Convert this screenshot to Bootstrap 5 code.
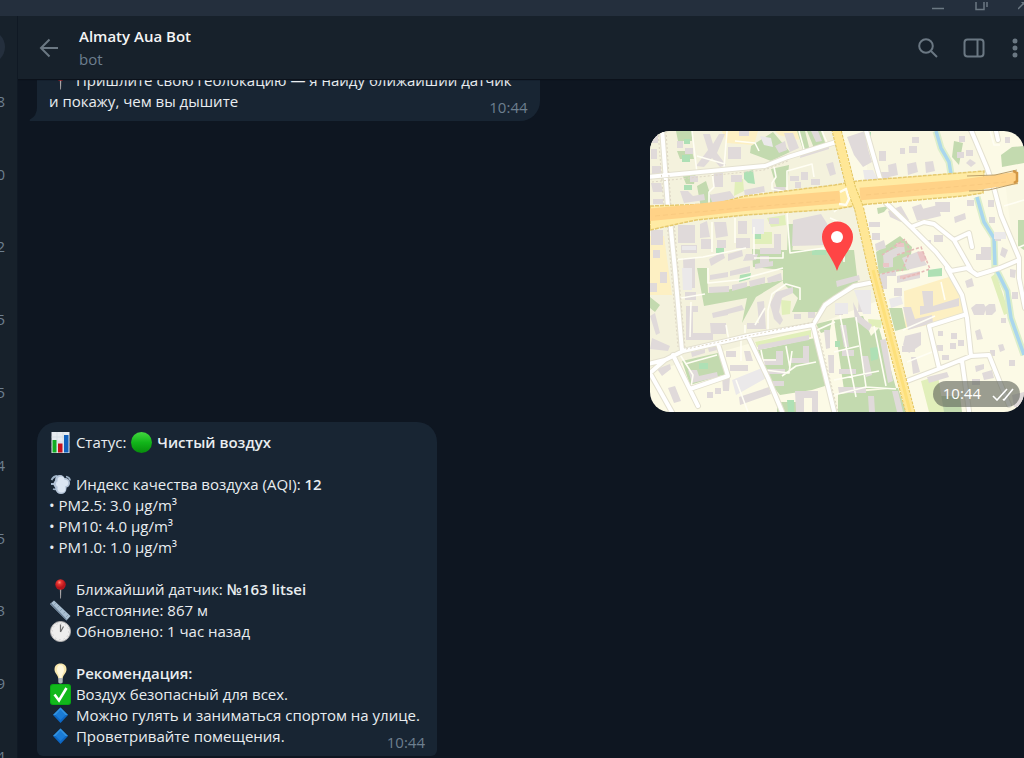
<!DOCTYPE html>
<html lang="ru">
<head>
<meta charset="utf-8">
<meta name="viewport" content="width=device-width, initial-scale=1">
<title>Almaty Aua Bot</title>
<link href="https://cdn.jsdelivr.net/npm/bootstrap@5.3.0/dist/css/bootstrap.min.css" rel="stylesheet">
<style>
body{font-family:"Open Sans","Noto Sans",sans-serif;font-size:15px;line-height:21px;background:#0e1621;color:#e9edf0}
button.ico{background:none;border:0;padding:0;color:#6b7883;display:block;flex:none}
.ico svg{display:block;fill:none;stroke:currentColor;stroke-width:2}
.titlebar{height:16px;background:#242f3d;flex:none}
.titlebar .ico svg{stroke-width:1.5}
.winbtns{gap:30px;margin-right:-7px}
.side{width:18px;background:#17212b;color:#6d7f8f;border-right:1px solid #101924;flex:none}
.me{height:49px;flex:none}
.me i{width:34px;height:34px;border-radius:50%;background:#242f3d;margin:14px 12px 0 0;flex:none}
.chats{margin-bottom:-35px}
.chats a{color:#6d7f8f;text-decoration:none;padding-right:12px;flex:1 1 0}
.chats span{flex:none}
.top{height:63px;background:#17212b;padding-left:21px;padding-right:4px;flex:none;box-shadow:0 1px 1px #0b111a;z-index:1}
.top h1{font-size:15px;line-height:21px;font-weight:600;margin:0 0 2px;color:#f5f5f5}
.who{margin-left:20px}
.sub,.time{color:#6d7f8f}
.tools{gap:25px}
.feed{padding:0 0 2px 19px;gap:10px}
.msg{background:#182533;border-radius:20px 20px 6px 6px;padding:10px 17px 9px 12px;flex:none}
.msg p{margin:0}
.msg b{font-weight:600}
.msg.first{border-radius:6px 20px 20px 0;padding-right:28px}
.time{right:12px;bottom:3px}
.tail{left:-8px;bottom:0}
.em{width:21px;height:21px;margin:-2px 1px;vertical-align:-3px}
.mapmsg{width:374px;border-radius:20px;overflow:hidden;flex:none}
.stamp{right:4px;bottom:5px;background:rgba(95,100,90,.62);color:#fff;border-radius:13px;padding:2px 6px 3px 10px;gap:11px}
</style>
</head>
<body>
<div class="vh-100 d-flex flex-column overflow-hidden">
  <div class="titlebar d-flex justify-content-end overflow-hidden">
    <div class="winbtns d-flex">
      <button class="ico" aria-label="Свернуть"><svg width="13" height="12"><path d="M0 6.500h12"/></svg></button>
      <button class="ico" aria-label="Развернуть"><svg width="13" height="12"><path d="M1-1h8v8.500H1zM12-1v6"/></svg></button>
      <button class="ico" aria-label="Закрыть"><svg width="13" height="12"><path d="M0-4l11 11M0 7L11-4"/></svg></button>
    </div>
  </div>
  <div class="d-flex flex-grow-1 overflow-hidden">
    <aside class="side d-flex flex-column overflow-hidden">
      <div class="me d-flex justify-content-end"><i></i></div>
      <nav class="chats d-flex flex-column flex-grow-1">
        <a href="#" class="d-flex justify-content-end align-items-center"><span>8</span></a>
        <a href="#" class="d-flex justify-content-end align-items-center"><span>0</span></a>
        <a href="#" class="d-flex justify-content-end align-items-center"><span>2</span></a>
        <a href="#" class="d-flex justify-content-end align-items-center"><span>5</span></a>
        <a href="#" class="d-flex justify-content-end align-items-center"><span>5</span></a>
        <a href="#" class="d-flex justify-content-end align-items-center"><span>4</span></a>
        <a href="#" class="d-flex justify-content-end align-items-center"><span>5</span></a>
        <a href="#" class="d-flex justify-content-end align-items-center"><span>3</span></a>
        <a href="#" class="d-flex justify-content-end align-items-center"><span>9</span></a>
        <a href="#" class="d-flex justify-content-end align-items-center"><span>4</span></a>
      </nav>
    </aside>
    <main class="d-flex flex-column flex-grow-1 overflow-hidden">
      <header class="top d-flex align-items-center">
        <button class="ico" aria-label="Назад"><svg width="20" height="20"><path d="M19 10H2M10.500 1.500L2 10l8.500 8.500"/></svg></button>
        <div class="who flex-grow-1">
          <h1>Almaty Aua Bot</h1>
          <div class="sub">bot</div>
        </div>
        <div class="tools d-flex align-items-center">
          <button class="ico" aria-label="Поиск"><svg width="20" height="20"><circle cx="8" cy="8" r="6.800"/><path d="M13 13l6 6"/></svg></button>
          <button class="ico" aria-label="Панель"><svg width="22" height="20"><rect x="1.500" y="1.500" width="19" height="17" rx="3"/><path d="M14.500 2v16"/></svg></button>
          <button class="ico" aria-label="Меню"><svg width="10" height="20"><g fill="currentColor" stroke="none"><circle cx="5" cy="3" r="2.500"/><circle cx="5" cy="10" r="2.500"/><circle cx="5" cy="17" r="2.500"/></g></svg></button>
        </div>
      </header>
      <section class="feed d-flex flex-column justify-content-end flex-grow-1 overflow-hidden">
        <div class="msg first position-relative align-self-start">
          <svg class="tail position-absolute" width="9" height="18"><path d="M8 0H9V18H1Q0 17 1 16.500Q8 13 8 4z" fill="#182533"/></svg>
          <p><svg class="em" viewBox="0 0 21 21"><use href="#pin"/></svg> Пришлите свою геолокацию — я найду ближайший датчик<br>и покажу, чем вы дышите</p>
          <span class="time position-absolute">10:44</span>
        </div>
        <div class="mapmsg position-relative align-self-end">
          <svg class="d-block w-100" viewBox="650 131 374 281" role="img" aria-label="Карта">
            <rect x="650" y="131" width="374" height="281" fill="#fcfae6"/>
            <path d="M650 131H838L862 230L880 300L815 325L650 372z" fill="#f4f2dd"/>
            <path d="M865 131H971L988 172L868 184zM1005 180h19v60h-12z" fill="#f9f7e2"/>
            <g fill="#fdf0c3">
              <path d="M722 131h36l-4 14-27-2zM775 131h24v9l-20-5zM650 236h14l8 59h-22z"/>
              <path d="M904 291l48-15 15 30-7 12-55 12z"/>
            </g>
            <!-- parks -->
            <g fill="#c3daaf">
              <path d="M783 250H854L858 284L836 295L820 312H792L798 298L783 283z"/>
              <path d="M697 268h10l1 25 76-13-28 17-14 26 5-25-43 8z"/>
              <path d="M751 146l22-14 17 20-19 9-21-8zM676 131h16v10h-14zM677 151h15l2 8h-14zM797 131h8l5 20-6 2zM807 131h14l5 14-12 3z"/>
              <path d="M771 169l18-4-2 22-10 2zM697 186l9-5 7 22-12 5zM682 174l14-2-2 12h-8z"/>
              <path d="M1001 155l11-8 12-1v17l-22 4zM954 141l9 2-4 22-7-8zM877 208l12-2-5 6-6 2zM1018 220h6v30l-6-4z"/>
              <path d="M752 249l31 1v20l-30-3zM788 224h7l-3 30h-5zM650 297l10 8-5 7-5-4z"/>
              <path d="M758 350l57-12 13 47-16 5-32 5-12-15zM834 320l29-4 8 20 8-8 17 60-52 2zM838 394l60-6 8 24h-68zM777 402h22v10h-22z"/>
              <path d="M682 361l40-9 4 22-36 11zM889 308h13l4 20-11 3zM876 252l24-16 12 11-3 23-30 4zM835 270l18-1-2 10-18 5z"/>
              <path d="M816 324l16-4-2 10-9 3zM938 396h22l2 16h-24z"/>
            </g>
            <g fill="#e1efba">
              <path d="M755 342l56-12v7l-54 10zM754 232h18v12h-18zM735 180l8-1 1 12-10 5zM781 300l10 1-1 13-8 1zM868 319l14 1-1 8-12-2zM921 381l17-5 6 36h-15zM767 218l18-3 1 10-15 2zM996 273l13 40-5 2-13-38z"/>
            </g>
            <g fill="#aee0b5">
              <path d="M684 139h6v5h-6zM682 155h8v7h-8zM744 172l9-2 2 14-7-1-4-4zM684 185h8v5h-8zM754 233h7v6h-7zM716 248h8v5h-8zM812 250h14v5h-14zM740 275l11-2-1 6-11 3zM699 363h9v6h-9zM928 270l14-2v8l-14 1zM870 348l8-1v12l-7 2zM835 341h5v6h-5zM787 400h7v12h-6zM865 132h6v8h-6z"/>
            </g>
            <path d="M936 131l5 17 8 14 2 12M977 197l7 25 10 16 1 33M997 271l10 20 4 27 13 37" fill="none" stroke="#dceeca" stroke-width="7"/>
            <path d="M936 131l5 17 8 14 2 12M977 197l7 25 10 16 1 27M997 271l10 20 4 27 13 37" fill="none" stroke="#a9d6ed" stroke-width="3.500"/>
            <!-- buildings -->
            <g fill="#e0dada">
              <path d="M703 134h7l3 10 6-10h6l-8 19 9 12-6 2-8-9-8 9-8-1 12-16zM728 147h13v12h-13zM739 131h10v5h-10zM651 134h7v9h-7zM651 149h6v10h-6zM652 166h9v8h-9zM677 141h6v7h-6zM685 148h8v6h-8zM775 146l10-5 2 9-8 3zM784 133h9l6 15-9 4zM801 150l28-8v7l-29 9zM826 164l7-2 3 12-6 2zM811 131h7l4 10-6 1z"/>
              <path d="M801 172h7v8h-7zM790 176h9v5h-9zM795 182h6v6h-6zM811 179h9v6h-9zM651 183h10l2 9h-10zM653 199h10v5h-10zM680 191h8l5 5 11-2 1 6-21 3zM714 173h9v14h-9zM731 175h11v7h-11zM709 195l21-4 5 7-22 6zM744 190l20-4 1 7-20 3zM774 187h11l2 6-13 2zM690 176h8v6h-8z"/>
              <path d="M678 225h17v18h-17zM700 224l7-3 3 16-10 1zM714 222h12l2 14-12 2zM738 221h9v13h-9zM701 239h10v10h-10zM717 240h9v8h-9zM736 238h14v10h-14zM681 245h16v8h-16zM651 230h12v15h-12zM653 250h7v8h-7zM793 220l28-6 7 11v20l-36 1zM774 234h7v20h-21v-6h14zM752 219h9v10h-9zM769 218h10v6h-10z"/>
              <path d="M709 259l14-7 2 6-14 8zM728 254l14-4 1 6-15 5zM746 254h12l-2 6-13 1zM760 256h9v7h-9zM710 275l18-3v5l-18 3zM730 271l20-5v6l-20 4zM755 264l18-3v5l-18 3zM709 287l20-1v6l-20 1zM732 285l15-3v5l-15 4zM749 281l16-4v6l-15 4zM767 278l14-5 1 7-14 3z"/>
              <path d="M683 258h12v30h-11zM660 272h7v11h-7zM650 283h7v9h-7zM685 292h11v8h-11zM686 306h12v6h-5v21h20v7h-27zM712 313l16-4v6l-15 3zM728 309l14-4 2 5-16 4zM710 323h16v11h-15zM757 302l7-1 2 28h-19v-6h12zM770 304l6-12 17-5v6l-11 5-3 14 4 8-3 5-6-6zM794 314h7v5h-7zM808 312h7v6h-7zM650 316l5-3 5 20-4 2zM652 338l18 8-2 5-18-2z"/>
              <path d="M691 352l14-3v4l-13 4zM708 348l13-3v4l-12 3zM688 370h9l2 6 18-4 1 5-26 6zM726 351h10v6h-10zM744 351h6l3 10h-7zM730 365h18v6h-18zM657 369l13-5 1 5-9 7zM668 388l7-2 6 15-7 2zM707 392h6v6h-6zM715 388h6v6h-6zM722 376h8l-1 15h-6zM739 397l30-10 2 7-31 11zM736 379l25-8 3 8-26 10zM758 345l51-10v5l-51 10zM776 351h7v14h-22v-6h15zM803 346h6v17h-19v-5h13zM768 369h17v5h-17zM795 391h23v21h-6v-14h-8v14h-8zM773 381h11v5h-11z"/>
              <path d="M836 281l23-6 1 5-23 7zM859 294h10v18h-11zM853 302l7 14 12 9-3 6-14-11zM824 330h6v18l-4 1zM828 355h6v18h-5zM840 325h6l3 22h-5zM842 350h12v6h-12zM861 356h7l4 19-6 2zM839 369h17v5h-17zM880 340l6-1 7 42-5 2zM838 387h28v6h-27zM868 396h6l1 16h-6zM892 391h6l5 21h-6zM835 310h8v5h-8z"/>
              <path d="M847 137l18-6 3 18 4 13-9 5-9-12zM900 148h5v6h-5zM909 146h8v7h-8zM912 137h7v6h-7zM888 165l8-2 2 12-9 2zM907 164l9-2 2 10-10 3zM925 162l8-1 2 10-9 2zM880 172h9v8h-9zM957 152h7v6h-7zM966 150h7v6h-7zM959 136h6v6h-6zM970 159l6 4-5 4-5-4zM879 151h7v10h-7z"/>
              <path d="M888 211l13-5 8 14-8 2-11-5zM912 207l9-3 6 13-10 4zM918 210l20-5 3 11-21 5zM935 202h15v10h-14zM954 217l11-4 1 6-11 4zM869 222h11v5h-11zM872 233h8v7h-8zM875 244l9-4 2 8-10 3zM934 235h9v7h-9zM925 240h6v5h-6zM967 200h7v6h-7zM988 200h6v7h-6zM981 247h10v13h-15v-6h5zM989 217h6v6h-6zM995 234h6v7h-6zM1002 247l6 3-3 8-5-3z"/>
              <path d="M883 254l21-10 1 8-12 6v9l-9 1zM902 258l17-7 8 14-20 5zM877 275l19-5v6h-9v13h-6zM894 288h8v8h-8zM903 307h8l4 12 17-4 1 8-25 7zM922 291h11v15l26-8v8l-39 9v-9h4zM897 276l23-5v7l-23 5zM905 336l16-4v13l-12 8-6-8zM902 346h13v6h-13zM911 357h5l4 15-7 2zM927 377l20-5 2 5-20 6z"/>
              <path d="M971 308l5-4h8l2 4-2 7h-10zM985 307l4-3h6l1 7-4 4h-6zM975 331l5-2 3 10-6 1zM951 333h6v6h-6zM938 331h5v5h-5zM950 343h6v6h-6zM937 345h6v6h-6zM958 340h6v6h-6zM942 355h7v5h-7zM998 345l5-1 2 6-5 2zM1001 318h5v5h-5zM1010 269l6 1-1 8-5-1zM1012 292h6v7h-6zM965 281l7-3 2 8-7 2zM975 366l9-2v5l-8 3zM982 373l10-3 2 8-10 2zM972 379h8v6h-8zM990 350h5v6h-5zM1009 360h6v6h-6zM1005 137h5v6h-5zM1012 395l12-3v15h-10z"/>
            </g>
            <g fill="#eac6c6"><path d="M896 243h8v4h-8zM883 263h6v4h-6zM917 252l6-1 4 9-6 2zM900 276l20-4v3l-20 4z"/></g>
            <g fill="#ebe9ea"><path d="M760 136l11 2 2 9-9-2zM682 246h14v4h-14zM752 219h12v15h-12zM682 268h10v22h-9zM835 303h13v11h-13zM854 290h17v24h-8zM732 380l30-12 4 10-30 17zM863 170h10l5 10-13 2zM889 299l12-3 2 8-12 4zM994 232h12v7h-12z"/></g>
            <!-- small lanes -->
            <g fill="none" stroke="#fffef4" stroke-width="1.600" stroke-linejoin="round">
              <path d="M692 131l5 42M727 131l-3 37M697 156l28 8M712 172l2 15-5 5v15M774 167l2 10-4 6v6l16 3M742 205v-8l22-4 3 7M787 191v-20l25-7 2 13M799 131l6 22M822 131l6 14M673 260l30-3 43-9M712 222v30M735 218v25M754 227v28M754 258h29v-6M787 213l3 40 34-5M708 268v15l30-3 45-12M675 299l30-5M691 302l-1 35M726 325l3 16M745 325v8M768 330v-20l4-16 14-10 14 4v12M755 325l10-17M679 353l14 22-2 12M685 364l32-9M741 336v25M758 360h18M761 350l4 20 24 3 3-22M782 376l14-10 20-4M786 346l4 22M840 315l16 82M834 352l25-6M834 380l45-9M856 317l10 70M874 326l12 60M903 330l32-14M941 282l4 18M830 218l14 6v38M907 362l25-10M736 380l12 32M834 395l32-8 30 2M817 330l18-8M1024 200l-20 6M990 131l4 14h6M1013 250l11-5M834 212l10-8M954 175l2 24M735 141l20 2 4 8"/>
            </g>
            <path d="M882 255l23-16 5 12-8 20M897 255l24-8 9 22-28 10M877 275l22-5" fill="none" stroke="#e4b9b6" stroke-width="1.500" stroke-dasharray="3 2"/>
            <!-- streets -->
            <g fill="none" stroke-linejoin="round" stroke-linecap="round">
              <path id="st" d="M662 128l6 80M670 220l5 50 7 81M648 177l117-11 23-9 48-15M648 364l17-4 18-9 35-8 30-7 65-11 12-20 10-7 19-12 20-4M650 373l15-13M650 373l23 41M673 355l25 51M718 344l10 32-38 13M748 336l20 42 15 36M813 325l22 90M866 130l15 52M886 203l25 24 25 25 15 19M911 227l13-5 10 2 20 16 17 30M954 240l15-7 3 14M971 130l16 38 7 20 7 27 18 43v20l6 30M947 268l15 27 5 23 4 38M929 326l35-11M929 326l10 42M907 381l34-13 30-12 18-1 20 50M962 361l7 50M951 271l16-3 10 7 23-7 19-8M996 131l2 9" stroke="#e4e1d0" stroke-width="6"/>
              <path d="M662 128l6 80M670 220l5 50 7 81M648 177l117-11 23-9 48-15M648 364l17-4 18-9 35-8 30-7 65-11 12-20 10-7 19-12 20-4M650 373l15-13M650 373l23 41M673 355l25 51M718 344l10 32-38 13M748 336l20 42 15 36M813 325l22 90M866 130l15 52M886 203l25 24 25 25 15 19M911 227l13-5 10 2 20 16 17 30M954 240l15-7 3 14M971 130l16 38 7 20 7 27 18 43v20l6 30M947 268l15 27 5 23 4 38M929 326l35-11M929 326l10 42M907 381l34-13 30-12 18-1 20 50M962 361l7 50M951 271l16-3 10 7 23-7 19-8M996 131l2 9" stroke="#fff" stroke-width="4"/>
            </g>
            <path d="M658 131l6 76M666 131l5 76M667 222l11 125M674 222l11 125M652 182l112-12 24-9M817 327l21 85M686 349l128-27" fill="none" stroke="#ddd6c5" stroke-width="1" stroke-dasharray="2 2"/>
            <!-- highway -->
            <path d="M650 206l65-2 30-8 90-11 22-4 115-9 12-1-1 22-20 3-104 9-22 4-91 6-50 5-46 10z" fill="#ffeba4" stroke="#e5c96e" stroke-width="1.500" stroke-dasharray="4 1"/>
            <path d="M836 128l15 60 8 20 14 62 38 145" fill="none" stroke="#e3c55f" stroke-width="10" stroke-dasharray="3 1"/>
            <path d="M836 128l15 60 8 20 14 62 38 145" fill="none" stroke="#ffe796" stroke-width="8"/>
            <path d="M873 270l38 145" fill="none" stroke="#fde07b" stroke-width="3"/>
            <path d="M648 215l42-4 52-6 98-8M860 194l100-8 57-8" fill="none" stroke="#ffd287" stroke-width="12.500"/>
            <path d="M967 176l28-1 22-5M969 191l20-1 29-7" fill="none" stroke="#b99e6b" stroke-width="1"/>
            <path d="M1013 171l4 2v8l-3 2" fill="none" stroke="#d39845" stroke-width="2.500"/>
            <path d="M655 216l85-8 95-8M866 195l140-13" fill="none" stroke="#f9ca80" stroke-width="1" stroke-dasharray="5 3"/>
            <path d="M840 192l6-3 3 10-3 6-7-1" fill="none" stroke="#fffdf0" stroke-width="2.500"/>
            <!-- place marker -->
            <path d="M837 271C833 258 822 248 822 237a15.500 15.500 0 0 1 31 0C853 248 841 258 837 271z" fill="#ff4545"/>
            <circle cx="837" cy="237" r="6" fill="#fff"/>
          </svg>
          <div class="stamp position-absolute d-flex align-items-center">
            <span>10:44</span>
            <svg width="22" height="14" fill="none" stroke="#fff" stroke-width="1.600"><path d="M1 9l4 4L15 2M11 12l1 1L21 2"/></svg>
          </div>
        </div>
        <div class="msg position-relative align-self-start">
          <p><svg class="em" viewBox="0 0 21 21"><path d="M1.500 0h18v21h-18z" fill="#e6ebf0"/><path d="M1.500 5h18M1.500 10h18M1.500 15h18M7 0v21M13 0v21" stroke="#cfd7df" stroke-width=".6"/><path d="M2.500 8h4v12.500h-4z" fill="#12ad22"/><path d="M8 11.500h4.500v9H8z" fill="#c8101c"/><path d="M14 3h4.500v17.500H14z" fill="#1161bd"/></svg> Статус: <svg class="em" viewBox="0 0 21 21"><circle cx="10.500" cy="10.500" r="10.500" fill="url(#gg)"/></svg> <b>Чистый воздух</b></p>
          <p>&nbsp;</p>
          <p><svg class="em" viewBox="0 0 21 21"><path d="M1.500 6q2-4 6-4M1 10h5M3 15q3 1 5-1M16 2.500q4 1 4 4" fill="none" stroke="#9fb3c8" stroke-width="1.800"/><g fill="#b4c4d8"><circle cx="10" cy="6" r="5"/><circle cx="15" cy="9" r="5"/><circle cx="8" cy="10" r="4.500"/><circle cx="11" cy="14.500" r="5.500"/></g><g fill="#dbe6f3"><circle cx="11" cy="6" r="3.500"/><circle cx="15" cy="9" r="3.200"/><circle cx="9" cy="10" r="3"/><circle cx="11.500" cy="14.500" r="4"/></g></svg> Индекс качества воздуха (AQI): <b>12</b></p>
          <p>• PM2.5: 3.0 µg/m³</p>
          <p>• PM10: 4.0 µg/m³</p>
          <p>• PM1.0: 1.0 µg/m³</p>
          <p>&nbsp;</p>
          <p><svg class="em" viewBox="0 0 21 21"><g id="pin"><path d="M9.800 9h1.500l-.3 10.500h-.8z" fill="#a9a6a8"/><circle cx="10.500" cy="5.500" r="5.200" fill="url(#rg)"/></g></svg> Ближайший датчик: <b>№163 litsei</b></p>
          <p><svg class="em" viewBox="0 0 21 21"><path d="M0 4l4-3.500L20.500 16l-4 4.500z" fill="#a9bfd2"/><path d="M0 4l16.500 16.500v-1.500L1.300 3z" fill="#6c8298"/><path d="M6 3l-2 2M9 6L7.500 7.500M12 9l-2 2M15 12l-1.500 1.500M18 15l-2 2" stroke="#8299ad" stroke-width=".8"/></svg> Расстояние: 867 м</p>
          <p><svg class="em" viewBox="0 0 21 21"><circle cx="10.500" cy="10.500" r="10" fill="#eeeeed" stroke="#b7b5b4"/><circle cx="10.500" cy="10.500" r="8.200" fill="none" stroke="#c2c1c1" stroke-width="1" stroke-dasharray="1 3.290"/><path d="M10.500 11V3.500M10.500 11l3-5.500" stroke="#6a6a6a" stroke-width="1.200"/></svg> Обновлено: 1 час назад</p>
          <p>&nbsp;</p>
          <p><svg class="em" viewBox="0 0 21 21"><path d="M10.500.5C6.500.5 4.500 3 4.500 6.500c0 4 3.500 5 3.800 9h4.400c.3-4 3.800-5 3.800-9 0-3.500-2-6-6-6z" fill="#f8e7ae"/><path d="M10.500 2C8 2 7 4 7 7s2 4 2.500 8h2c.5-4 2.500-5 2.500-8s-1-5-3.500-5z" fill="#fff8dc"/><path d="M8.300 15h4.400v4.500l-1.500 1h-1.500l-1.400-1z" fill="#aeb4b9"/></svg> <b>Рекомендация:</b></p>
          <p><svg class="em" viewBox="0 0 21 21"><rect width="21" height="21" rx="3" fill="#08a914"/><rect x="1" y="1" width="19" height="19" rx="2.500" fill="#12b81c"/><path d="M4.500 10.500l4.500 6L16.500 4" fill="none" stroke="#fff" stroke-width="2.600"/></svg> Воздух безопасный для всех.</p>
          <p><svg class="em" viewBox="0 0 21 21"><g id="dia"><path d="M10.500 2.500L18 10l-7.500 8L3 10z" fill="#0d67c4"/><path d="M10.500 2.500L18 10H3z" fill="#3393df"/><path d="M10.500 4.500l5 5.500-5 5-5-5z" fill="#1a7bd5"/></g></svg> Можно гулять и заниматься спортом на улице.</p>
          <p><svg class="em" viewBox="0 0 21 21"><use href="#dia"/></svg> Проветривайте помещения.</p>
          <span class="time position-absolute">10:44</span>
        </div>
      </section>
    </main>
  </div>
</div>
<svg class="position-absolute" width="0" height="0"><defs>
  <linearGradient id="gg" x2="0" y2="1"><stop stop-color="#43d83f"/><stop offset=".5" stop-color="#12b51a"/><stop offset="1" stop-color="#078c0c"/></linearGradient>
  <radialGradient id="rg" cx=".4" cy=".3"><stop stop-color="#ff8d7c"/><stop offset=".4" stop-color="#e63430"/><stop offset="1" stop-color="#b5151c"/></radialGradient>
</defs></svg>
<script src="https://cdn.jsdelivr.net/npm/bootstrap@5.3.0/dist/js/bootstrap.bundle.min.js"></script>
</body>
</html>
